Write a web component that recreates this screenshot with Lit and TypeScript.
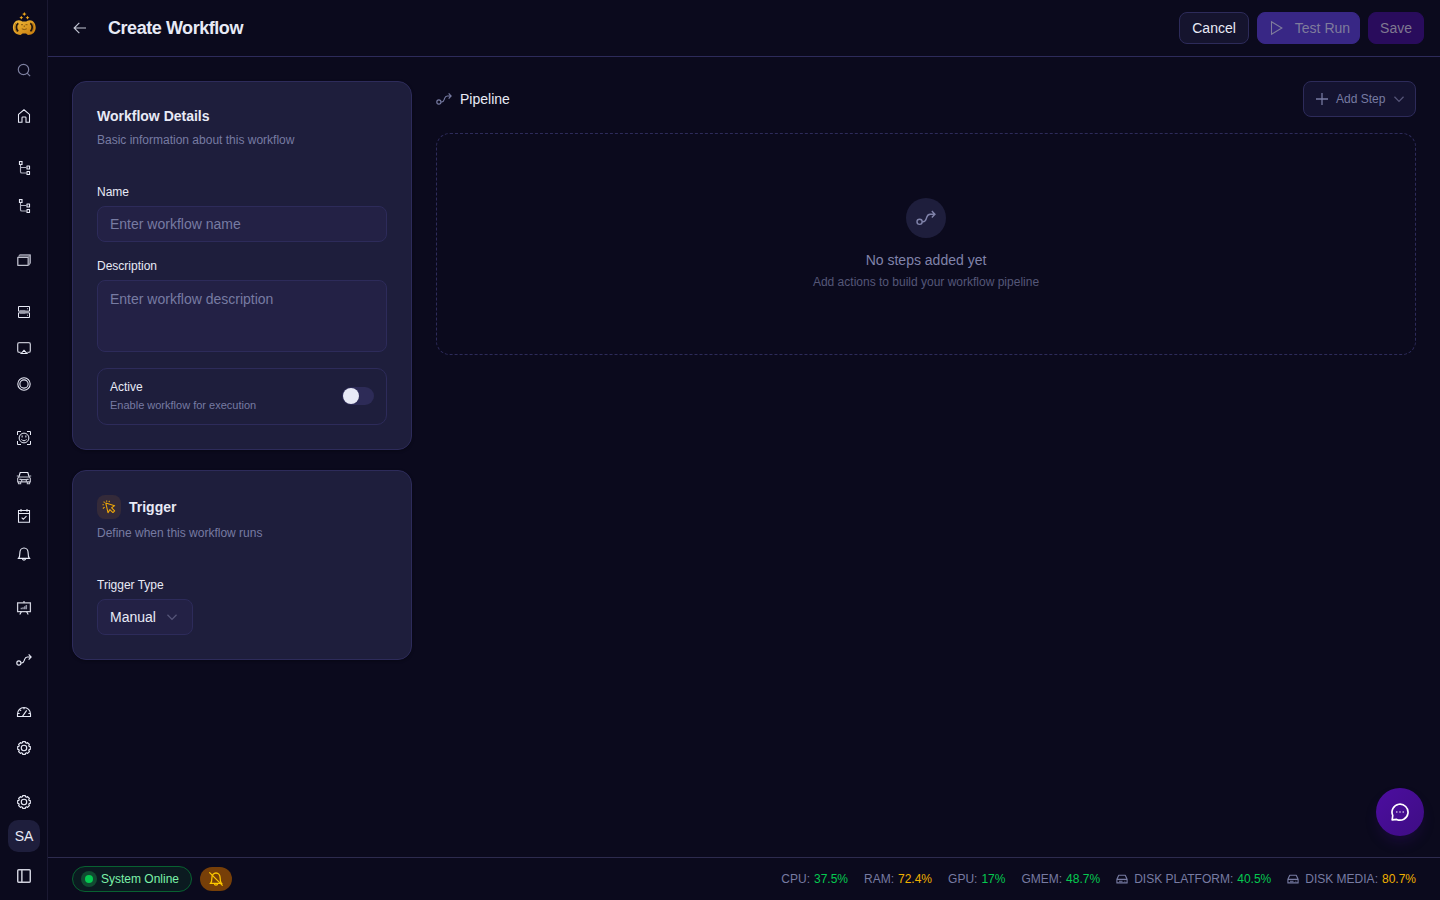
import { LitElement, html, css, svg } from "lit";
import { customElement } from "lit/decorators.js";

const flow = svg`<g stroke-width="1.7"><circle cx="4.300" cy="16.500" r="3.100"/><path d="M7.400 16.500h1.100c2 0 3-1.200 3.800-3.600l.6-1.800C13.700 8.700 15 7.500 17 7.500h5.200M19 3.700l3.700 3.800L19 11.300"/></g>`;

const cogPoints = Array.from({ length: 8 }, (_, i) => {
  const at = (r: number, deg: number) => {
    const a = ((i * 45 + deg - 90) * Math.PI) / 180;
    return `${(12 + r * Math.cos(a)).toFixed(2)} ${(12 + r * Math.sin(a)).toFixed(2)}`;
  };
  return `${i ? "L" : "M"}${at(9.7, -12)}L${at(9.7, 12)}L${at(8.1, 17)}L${at(8.1, 28)}`;
}).join("");
const gear = svg`<path d="${cogPoints}Z" stroke-width="1.7" stroke-linejoin="round"/><circle cx="12" cy="12" r="4.100" stroke-width="1.700"/>`;
const tree = svg`<path d="M5.250 2.250h3.750v4.500h-3.750z" stroke-width="1.700"/><path d="M6.750 7v10.500q0 2 2 2H15.500M6.750 11.250h8.500" stroke="#b0b1c0" stroke-width="1.700"/><path d="M16.500 9h3.750v4.500H16.500zM16.500 17.250h3.750v4.500H16.500z" stroke-width="1.700" stroke-linejoin="round"/>`;
const bell = svg`<path d="M3.800 18.500c1.900-2 2-4 2-8C5.800 6.300 8.300 3 12 3s6.200 3.300 6.200 7.500c0 4 .1 6 2 8zM9.500 18.700c.2 3.200 4.800 3.200 5 0"/>`;

const icons: Record<string, unknown> = {
  search: svg`<g stroke-width="1.8"><circle cx="11.250" cy="11.250" r="7.800"/><path d="m16.700 16.700 4.500 4.500"/></g>`,
  home: svg`<path d="M3.750 9.700 12 2.700l8.250 7v11.550H15v-6.500q0-1.250-1.250-1.250h-3.500Q9 13.500 9 14.750v6.500H3.750z" stroke-width="1.6"/>`,
  tree,
  layers: svg`<path d="M2.700 8h15.600v12H2.700z" stroke="#c0c1ce" stroke-width="1.900" stroke-linejoin="round"/><path d="M4 7 5.700 4.500h15.800v11.800L19 19.500M18.500 8l3-3.500" stroke="#a6a7b6" stroke-width="1.900" stroke-linejoin="round"/><path d="M5 6.200h15v11" stroke="#80818f" stroke-width="1.500"/>`,
  server: svg`<path d="M3.750 3.750h16.500v7H3.750zM3.750 13.250h16.500v7H3.750z"/><path d="M6 9.700h8M6 14.200h8" stroke="#8a8a9c"/><path d="M16.500 7.100h1.200M16.500 16.900h1.200"/>`,
  airplay: svg`<path d="M7 18.600H5q-2.500 0-2.500-2.300V6.300Q2.500 4 5 4h14q2.500 0 2.500 2.300v10q0 2.300-2.500 2.300H17" stroke="#bcbdca" stroke-width="2"/><path d="M7.500 20.250 12 15.400l4.500 4.850z" stroke-width="1.600"/>`,
  rings: svg`<g stroke-width="1.600"><circle cx="12" cy="12" r="9.300"/><circle cx="12" cy="12" r="6.200"/></g>`,
  face: svg`<path d="M2.250 7.500V2.250H7.500M16.500 2.250h5.250V7.500M21.750 16.500v5.250H16.500M7.500 21.750H2.250V16.500"/><circle cx="12" cy="12" r="7.300"/><path d="M9.200 8.200v3M14.800 8.200v3M8.300 14c1.700 2.900 5.700 2.900 7.400 0"/>`,
  car: svg`<path d="M4.200 10.500 6.300 3.750h11.400l2.100 6.750" stroke-width="1.700"/><path d="M4 10.500h16l1.500 2v5.250h-19V12.500zM3.750 18v2.700H7V18M17 18v2.700h3.250V18M5 14h3M16 14h3M1.200 9h2.500M20.300 9h2.500M8.500 17.500v-3h7v3" stroke="#c4c5d2" stroke-width="1.700"/>`,
  calendar: svg`<path d="M3.750 3.750h16.500v17.500H3.750zM3.750 8.250h16.500M7.500 1.500v4M16.500 1.500v4M8.500 14.500l2.400 2.400 4.800-4.800" stroke-width="1.600"/>`,
  bell: svg`<g stroke-width="1.700">${bell}</g>`,
  board: svg`<path d="M2.400 4.200h19.200v13.100H2.400zM12 1.500V4" stroke="#cfd0dc" stroke-width="1.900"/><path d="M8 17.500l-2.300 4.200M16 17.500l2.300 4.200" stroke-width="1.700"/><path d="M8 14v-2.500M10.500 14v-3.200M13 14V9.500M15.500 14V7.500" stroke="#9192a4" stroke-width="2.200"/>`,
  flow,
  gauge: svg`<path d="M2.250 18.750h19.500V15c0-5.700-4.300-9.750-9.750-9.750S2.250 9.300 2.250 15zM9.700 18.500 16 9.500M12 5.250V8M2.500 14.250h3M18.500 14.250h3M5.700 8.200l1.900 1.900" stroke-width="1.700"/>`,
  gear,
  panel: svg`<path d="M4 2.600h16q1.400 0 1.400 1.400v16q0 1.400-1.400 1.400H4q-1.400 0-1.400-1.400V4q0-1.400 1.400-1.400zM8.800 3v18" stroke="#cfd0dc" stroke-width="2.200"/>`,
  back: svg`<path d="M21 12H3.500M11 4.200 3.200 12l7.800 7.800" stroke-width="1.700"/>`,
  play: svg`<path d="M5.250 2.700v18.600L20.800 12z" stroke-width="1.600"/>`,
  plus: svg`<path d="M12 3v18M3 12h18" stroke-width="1.900"/>`,
  chevron: svg`<path d="m5.200 8.700 6.800 6.800 6.800-6.800" stroke-width="1.900"/>`,
  cursor: svg`<path d="M6.500 5.200 21.700 9.700l-5.200 3.600 5.200 5.200-3 3-5.200-5-3.200 5.200z" stroke-width="1.800" stroke-linejoin="round"/><path d="M8 .8v2M13 1.500l-1.300 2M.8 8h2.400M1.500 14.500l3-2.200M2.800 2.800l1.700 1.700" stroke-width="1.800"/>`,
  belloff: svg`<g stroke-width="1.900">${bell}<path d="m2 2 20 20"/></g>`,
  disk: svg`<path d="M1.800 12.500 5.500 4.500h13l3.700 8v7.300H1.800zM1.800 12.800h20.400M6 16.500h7M17 16.500h1.500" stroke-width="2.200" stroke-linejoin="round"/>`,
  chat: svg`<path d="M2.600 21.500 3.300 16.200A9.600 9.600 0 1 1 8 20.900z" stroke-width="2" stroke-linejoin="round"/><path d="M7.600 12h1.200M11.400 12h1.200M15.200 12h1.200" stroke-width="1.700"/>`,
};

const icon = (name: string, size = 16) =>
  html`<svg width=${size} height=${size} viewBox="0 0 24 24" fill="none" stroke="currentColor" stroke-width="1.5">${icons[name]}</svg>`;

const groups: [string, boolean][][] = [
  [["home", false]],
  [["tree", false], ["tree", true]],
  [["layers", false]],
  [["server", false], ["airplay", false], ["rings", false]],
  [["face", true], ["car", true], ["calendar", false], ["bell", true]],
  [["board", false]],
  [["flow", false]],
  [["gauge", false], ["gear", false]],
];

const stats = [
  { label: "CPU:", value: "37.5%", warn: false, disk: false },
  { label: "RAM:", value: "72.4%", warn: true, disk: false },
  { label: "GPU:", value: "17%", warn: false, disk: false },
  { label: "GMEM:", value: "48.7%", warn: false, disk: false },
  { label: "DISK PLATFORM:", value: "40.5%", warn: false, disk: true },
  { label: "DISK MEDIA:", value: "80.7%", warn: true, disk: true },
];

@customElement("app-root")
export class AppRoot extends LitElement {
  static styles = css`
    :host { display: block; height: 100vh; font-family: "Liberation Sans", Arial, sans-serif; font-size: 14px; line-height: 20px; color: #e8eaf6; background: #0b0a1d; }
    * { box-sizing: border-box; }
    svg { display: block; flex: none; }
    h1, h2, p { margin: 0; }
    button, input, textarea { font: inherit; color: inherit; margin: 0; }
    .shell { display: grid; grid-template-columns: 48px 1fr; height: 100%; overflow: hidden; background: #0b0a1d; }
    .side { display: flex; flex-direction: column; justify-content: space-between; border-right: 1px solid #1b1932; }
    .cell { display: flex; align-items: center; justify-content: center; width: 48px; height: 36px; }
    .tall { height: 40px; }
    .logo { height: 46px; padding-top: 2px; }
    .find { height: 36px; margin: 6px 0 10px; color: #7c7f9f; }
    .nav { display: flex; flex-direction: column; gap: 16px; }
    .avatar { width: 32px; height: 32px; border-radius: 10px; margin-left: 8px; background: #1e1e3c; }
    .toggle { height: 48px; }
    .main { display: grid; grid-template-rows: 57px 1fr 43px; min-width: 0; }
    .head { display: flex; align-items: center; border-bottom: 1px solid #2d2b5a; padding: 0 16px 0 24px; gap: 8px; }
    .back { display: flex; color: #c4c6d4; margin-right: 12px; }
    h1 { flex: 1; font-size: 18px; line-height: 28px; letter-spacing: -0.45px; font-weight: 700; }
    .btn { display: flex; align-items: center; height: 32px; border: 1px solid #2d2b5a; border-radius: 8px; padding: 0 12px; background: #15142e; white-space: nowrap; }
    .run { background: #382785; border-color: #382785; color: #7f7c9c; padding: 0 9px 0 10px; gap: 11px; }
    .save { background: #290c5c; border-color: #290c5c; color: #7f7890; padding: 0 11px; }
    .body { display: grid; grid-template-columns: 340px 1fr; gap: 24px; padding: 24px; align-items: start; }
    .stack { display: flex; flex-direction: column; gap: 20px; }
    .card { border: 1px solid #2d2b5a; border-radius: 14px; background: #1e1e3c; padding: 24px; box-shadow: 0 1px 3px rgba(0,0,0,.3); }
    h2 { font-size: 14px; line-height: 20px; font-weight: 700; }
    .sub { font-size: 12px; line-height: 16px; color: #777ba2; margin-top: 6px; }
    .label { display: block; font-size: 12px; line-height: 12px; margin-bottom: 8px; }
    .field { display: block; width: 100%; border: 1px solid #2d2b5a; border-radius: 8px; background: #232145; padding: 7px 12px; outline: none; resize: none; }
    .field::placeholder { color: #777ba2; opacity: 1; }
    .name { height: 36px; margin-bottom: 18px; }
    .desc { height: 72px; padding-top: 8px; margin-bottom: 16px; }
    .first-label { margin-top: 38px; }
    .active { display: flex; align-items: center; justify-content: space-between; height: 57px; padding: 0 12px 2px; border: 1px solid #2d2b5a; border-radius: 10px; font-size: 12px; line-height: 16px; }
    .note { font-size: 11px; line-height: 16px; margin-top: 2px; color: #777ba2; }
    .switch { width: 32px; height: 18px; padding: 1px; border-radius: 9px; background: #2d2b57; }
    .knob { width: 16px; height: 16px; border-radius: 50%; background: #e8eaf6; }
    .row { display: flex; align-items: center; gap: 8px; }
    .tile { display: flex; align-items: center; justify-content: center; width: 24px; height: 24px; border-radius: 8px; background: #342a39; color: #f0a808; }
    .select { display: flex; align-items: center; gap: 8px; width: 96px; height: 36px; border: 1px solid #2d2b5a; border-radius: 8px; background: #232145; padding: 0 12px; }
    .dim { color: #565579; display: flex; }
    .pipe-head { display: flex; align-items: center; justify-content: space-between; height: 36px; margin-bottom: 16px; }
    .muted { color: #777ba2; display: flex; }
    .add { height: 36px; width: 113px; gap: 6px; padding: 0 8px 0 10px; font-size: 12px; color: #777ba2; background: #141330; }
    .add-label { flex: 1; text-align: left; }
    .empty { display: flex; flex-direction: column; align-items: center; height: 222px; padding-top: 64px; border: 1px dashed #2d2b5a; border-radius: 14px; color: #8083aa; }
    .round { display: flex; align-items: center; justify-content: center; width: 40px; height: 40px; border-radius: 50%; background: #1e1e3c; margin-bottom: 12px; }
    .hint { font-size: 12px; line-height: 16px; margin-top: 4px; color: #555778; }
    .foot { display: flex; align-items: center; justify-content: space-between; border-top: 1px solid #2d2b4e; padding: 0 24px; font-size: 12px; line-height: 16px; }
    .online { display: flex; align-items: center; gap: 4px; height: 26px; padding: 0 12px 0 8px; border: 1px solid #086231; border-radius: 13px; background: #0b1a20; color: #7bf1a8; }
    .halo { display: flex; align-items: center; justify-content: center; width: 16px; height: 16px; border-radius: 50%; background: #114b31; }
    .dot { width: 8px; height: 8px; border-radius: 50%; background: #05c950; }
    .alert { display: flex; align-items: center; justify-content: center; width: 32px; height: 24px; border-radius: 12px; background: #773f08; color: #fcc800; }
    .stats { display: flex; gap: 16px; color: #777ba2; }
    .stat { display: flex; align-items: center; gap: 4px; }
    .stat svg { margin-right: 2px; }
    .ok { color: #05c950; }
    .warn { color: #f0b100; }
    .chat { position: absolute; right: 16px; bottom: 64px; display: flex; align-items: center; justify-content: center; width: 48px; height: 48px; border-radius: 50%; color: #fff; background: linear-gradient(135deg, #4c0da0, #3e0d83); box-shadow: 0 8px 14px -3px rgba(60,13,130,.3); }
  `;

  render() {
    return html`
      <div class="shell">
        <nav class="side">
          <div>
            <div class="cell logo">
              <svg width="24" height="26" viewBox="0 0 24 26">
                <defs><linearGradient id="gold" x2="1" y2="1"><stop stop-color="#f3bd3c"/><stop offset="1" stop-color="#c77a0b"/></linearGradient></defs>
                <g fill="#eda51b"><path d="m12.300 1 .8 1.400 1.500.6-1.500.7-.8 1.300-.8-1.300-1.400-.7 1.400-.6z"/><path d="m9.300 4.800.7 1.300 1.300.6-1.300.6-.7 1.200-.7-1.200-1.200-.6 1.200-.6zM15.500 4.800l.7 1.300 1.200.6-1.200.6-.7 1.200-.7-1.200-1.200-.6 1.200-.6z"/></g>
                <path d="M6.800 9.200c2 0 3 .8 3.600 1.400h3.800c.6-.6 1.600-1.400 3.600-1.400 3.500 0 5.900 3.500 5.900 7.400 0 4.500-3 7.400-7.700 7.400l-2-1.600h-3.400l-2 1.600c-4.700 0-7.700-3-7.700-7.400 0-3.900 2.400-7.400 5.900-7.400z" fill="url(#gold)"/>
                <path d="M6.300 12.200c-2.600 1.600-2.500 6-.2 8.200M18.300 12.200c2.600 1.600 2.500 6 .2 8.200" stroke="#24180f" stroke-width="1.800" fill="none"/>
                <path d="M4 12c-2 3-1.300 7 1 9M20.500 12c2 3 1.300 7-1 9" stroke="#99600c" stroke-width=".7" fill="none"/>
                <path d="M9 13.700h2M13.500 13.700h2M9.800 17.800q2.500 1.600 5 0M12.250 14.500v1.500" stroke="#7c500d" stroke-width=".9" fill="none"/>
              </svg>
            </div>
            <div class="cell find">${icon("search")}</div>
            <div class="nav">
              ${groups.map((g) => html`<div>${g.map(([n, tall]) => html`<div class="cell ${tall ? "tall" : ""}">${icon(n)}</div>`)}</div>`)}
            </div>
          </div>
          <div>
            <div class="cell">${icon("gear")}</div>
            <div class="cell avatar">SA</div>
            <div class="cell toggle">${icon("panel")}</div>
          </div>
        </nav>
        <div class="main">
          <header class="head">
            <span class="back">${icon("back")}</span>
            <h1>Create Workflow</h1>
            <button class="btn">Cancel</button>
            <button class="btn run">${icon("play")}Test Run</button>
            <button class="btn save">Save</button>
          </header>
          <main class="body">
            <div class="stack">
              <section class="card">
                <h2>Workflow Details</h2>
                <p class="sub">Basic information about this workflow</p>
                <label class="label first-label">Name</label>
                <input class="field name" placeholder="Enter workflow name" />
                <label class="label">Description</label>
                <textarea class="field desc" placeholder="Enter workflow description"></textarea>
                <div class="active">
                  <div>Active<div class="note">Enable workflow for execution</div></div>
                  <div class="switch"><div class="knob"></div></div>
                </div>
              </section>
              <section class="card">
                <div class="row"><span class="tile">${icon("cursor", 14)}</span><h2>Trigger</h2></div>
                <p class="sub">Define when this workflow runs</p>
                <label class="label first-label">Trigger Type</label>
                <div class="select">Manual<span class="dim">${icon("chevron")}</span></div>
              </section>
            </div>
            <section>
              <div class="pipe-head">
                <div class="row"><span class="muted">${icon("flow")}</span>Pipeline</div>
                <button class="btn add">${icon("plus")}<span class="add-label">Add Step</span><span class="dim">${icon("chevron")}</span></button>
              </div>
              <div class="empty">
                <div class="round">${icon("flow", 20)}</div>
                <div>No steps added yet</div>
                <div class="hint">Add actions to build your workflow pipeline</div>
              </div>
            </section>
          </main>
          <footer class="foot">
            <div class="row">
              <div class="online"><span class="halo"><span class="dot"></span></span>System Online</div>
              <div class="alert">${icon("belloff")}</div>
            </div>
            <div class="stats">
              ${stats.map((s) => html`<div class="stat">${s.disk ? icon("disk", 12) : ""}<span>${s.label}</span><span class=${s.warn ? "warn" : "ok"}>${s.value}</span></div>`)}
            </div>
          </footer>
        </div>
      </div>
      <div class="chat">${icon("chat", 20)}</div>
    `;
  }
}
